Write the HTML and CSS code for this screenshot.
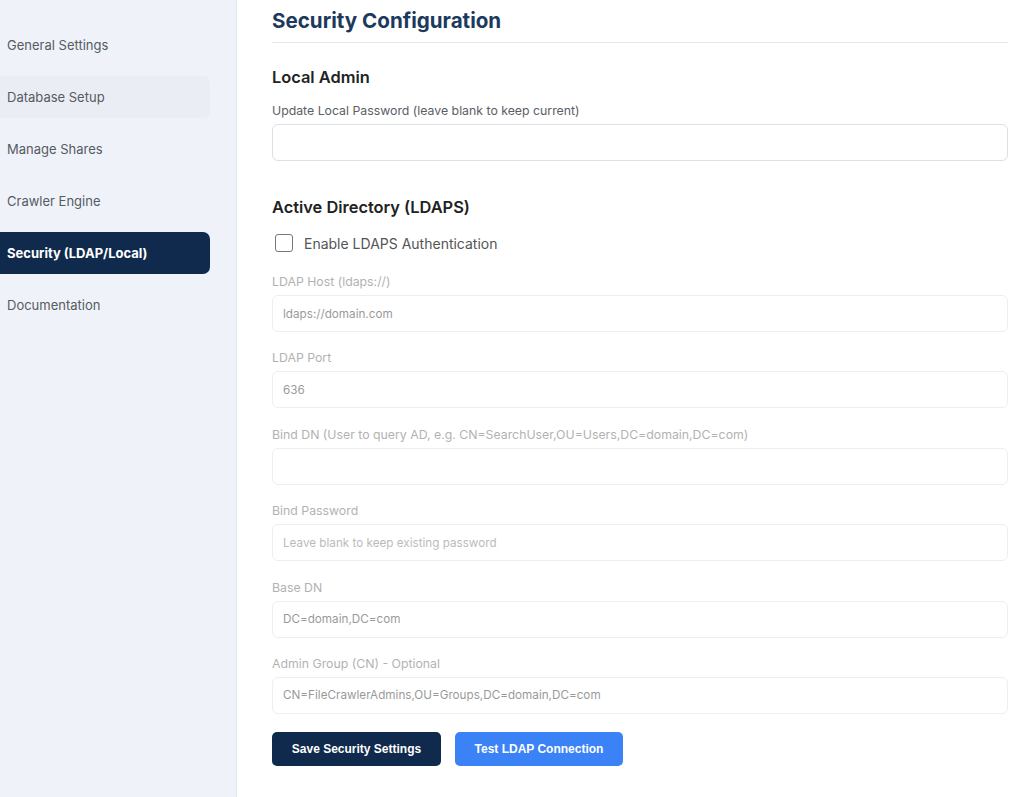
FILE: index.html
```html
<!DOCTYPE html>
<html>
<head>
<meta charset="utf-8">
<link rel="stylesheet" href="styles.css">
</head>
<body>
<div class="layout">
  <aside class="sidebar">
    <nav class="nav">
      <a class="nav-item">General Settings</a>
      <a class="nav-item hover">Database Setup</a>
      <a class="nav-item">Manage Shares</a>
      <a class="nav-item">Crawler Engine</a>
      <a class="nav-item active">Security (LDAP/Local)</a>
      <a class="nav-item">Documentation</a>
    </nav>
  </aside>
  <main class="main">
    <h2 class="page-title">Security Configuration</h2>
    <h3 class="section-title first">Local Admin</h3>
    <div class="field">
      <label class="label">Update Local Password (leave blank to keep current)</label>
      <div class="input"></div>
    </div>
    <h3 class="section-title">Active Directory (LDAPS)</h3>
    <label class="check-row"><span class="checkbox"></span><span class="check-label">Enable LDAPS Authentication</span></label>
    <div class="disabled-group">
      <div class="field">
        <label class="label">LDAP Host (ldaps://)</label>
        <div class="input">ldaps://domain.com</div>
      </div>
      <div class="field">
        <label class="label">LDAP Port</label>
        <div class="input">636</div>
      </div>
      <div class="field">
        <label class="label">Bind DN (User to query AD, e.g. CN=SearchUser,OU=Users,DC=domain,DC=com)</label>
        <div class="input"></div>
      </div>
      <div class="field">
        <label class="label">Bind Password</label>
        <div class="input placeholder">Leave blank to keep existing password</div>
      </div>
      <div class="field">
        <label class="label">Base DN</label>
        <div class="input">DC=domain,DC=com</div>
      </div>
      <div class="field">
        <label class="label">Admin Group (CN) - Optional</label>
        <div class="input">CN=FileCrawlerAdmins,OU=Groups,DC=domain,DC=com</div>
      </div>
    </div>
    <div class="actions">
      <button class="btn btn-dark">Save Security Settings</button>
      <button class="btn btn-blue">Test LDAP Connection</button>
    </div>
  </main>
</div>
</body>
</html>
```
FILE: styles.css
```css
* { box-sizing: border-box; }
html, body { margin: 0; padding: 0; }
body {
  font-family: Inter, "Liberation Sans", sans-serif;
  background: #ffffff;
  color: #222;
  width: 1024px;
  height: 797px;
  overflow: hidden;
}
.layout {
  display: flex;
  height: 797px;
}
.sidebar {
  width: 237px;
  flex: 0 0 237px;
  background: #eff3f9;
  border-right: 1px solid #e3e7ee;
}
.nav {
  display: flex;
  flex-direction: column;
  gap: 10px;
  padding-top: 24px;
  width: 210px;
}
.nav-item {
  display: flex;
  align-items: center;
  height: 42px;
  padding-left: 7px;
  font-size: 13px;
  color: #555b64;
  border-radius: 0 7px 7px 0;
}
.nav-item.hover {
  background: #eaeef4;
}
.nav-item.active {
  background: #0f2a4c;
  color: #ffffff;
  font-weight: 700;
}
.main {
  flex: 1;
  padding: 8px 16px 0 35px;
}
.page-title {
  margin: 0;
  font-size: 20.6px;
  font-weight: 700;
  color: #1c3a5e;
  padding-bottom: 9px;
  border-bottom: 1px solid #e4e6e9;
}
.section-title {
  margin: 36px 0 0;
  font-size: 16.4px;
  font-weight: 600;
  color: #222;
  line-height: 20px;
}
.section-title.first {
  margin-top: 24px;
}
.field {
  display: flex;
  flex-direction: column;
}
.section-title + .field {
  margin-top: 16px;
}
.label {
  font-size: 12.3px;
  color: #5a5e66;
  line-height: 16px;
  margin-bottom: 5px;
}
.input {
  height: 37px;
  border: 1px solid #dcdfe3;
  border-radius: 6px;
  background: #fff;
  font-size: 11.7px;
  color: #333;
  display: flex;
  align-items: center;
  padding: 0 10px;
}
.check-row {
  display: flex;
  align-items: center;
  margin-top: 17px;
  margin-left: 3px;
  gap: 11px;
}
.checkbox {
  width: 18px;
  height: 18px;
  border: 1.5px solid #777;
  border-radius: 3px;
  background: #fff;
}
.check-label {
  font-size: 14px;
  color: #555;
}
.disabled-group {
  opacity: 0.5;
  display: flex;
  flex-direction: column;
  gap: 18.4px;
  margin-top: 22px;
}
.disabled-group .label { color: #666; }
.disabled-group .input { color: #333; }
.disabled-group .input.placeholder { color: #777; }
.actions {
  display: flex;
  gap: 14px;
  margin-top: 18px;
}
.btn {
  font-family: "Liberation Sans", Arial, sans-serif;
  height: 34px;
  border: none;
  border-radius: 5px;
  font-size: 12px;
  font-weight: 700;
  color: #fff;
  padding: 0;
  white-space: nowrap;
}
.btn-dark { background: #0f2a4c; width: 169px; }
.btn-blue { background: #3b82f6; width: 168px; }
```
